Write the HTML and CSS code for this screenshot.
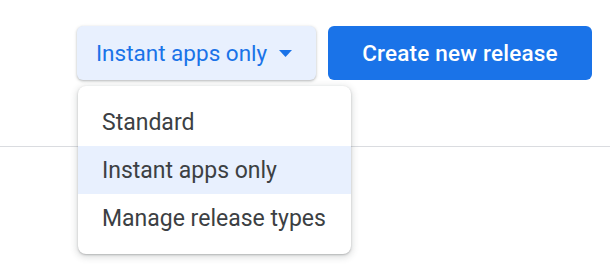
FILE: index.html
```html
<!DOCTYPE html>
<html>
<head>
<meta charset="utf-8">
<link rel="stylesheet" href="styles.css">
</head>
<body>
<div class="page">
  <header class="toolbar">
    <div class="dropdown">
      <button class="btn btn-tonal">
        <span>Instant apps only</span>
        <svg class="caret" width="13" height="7" viewBox="0 0 13 7"><path d="M0 0h13L6.5 7z" fill="#1a73e8"/></svg>
      </button>
      <ul class="menu">
        <li class="menu-item">Standard</li>
        <li class="menu-item selected">Instant apps only</li>
        <li class="menu-item">Manage release types</li>
      </ul>
    </div>
    <button class="btn btn-primary">Create new release</button>
  </header>
  <div class="divider"></div>
</div>
</body>
</html>
```
FILE: styles.css
```css
* { box-sizing: border-box; }
html, body { margin: 0; padding: 0; background: #fff; }
body { font-family: Roboto, "Noto Sans", Arial, sans-serif; width: 610px; height: 274px; overflow: hidden; }
.toolbar {
  display: flex;
  justify-content: flex-end;
  gap: 12px;
  padding: 26px 18px 0 0;
}
.dropdown { position: relative; }
.btn {
  height: 54px;
  border: none;
  border-radius: 6px;
  font-family: Roboto, Arial, sans-serif;
  cursor: pointer;
  display: flex;
  align-items: center;
}
.btn-tonal {
  width: 239px;
  background: #e8f0fe;
  color: #1a73e8;
  font-size: 22.5px;
  font-weight: 400;
  padding: 0 0 0 19px;
  gap: 12px;
  box-shadow: 0 1px 2px rgba(60,64,67,.25), 0 1px 3px 1px rgba(60,64,67,.1);
}
.caret { margin-top: 1px; }
.btn-primary {
  width: 264px;
  background: #1a73e8;
  color: #fff;
  font-size: 22.5px;
  font-weight: 500;
  justify-content: center;
  letter-spacing: 0.2px;
}
.menu {
  position: absolute;
  top: 60px;
  left: 1px;
  width: 273px;
  margin: 0;
  padding: 12px 0;
  list-style: none;
  background: #fff;
  border-radius: 8px;
  box-shadow: 0 2px 6px 2px rgba(60,64,67,.15), 0 1px 2px rgba(60,64,67,.3);
  z-index: 2;
}
.menu-item {
  height: 48px;
  display: flex;
  align-items: center;
  padding-left: 24px;
  font-size: 23px;
  color: #3c4043;
}
.menu-item.selected { background: #e8f0fe; }
.divider {
  margin-top: 66px;
  border-top: 1px solid #dadce0;
}
```
